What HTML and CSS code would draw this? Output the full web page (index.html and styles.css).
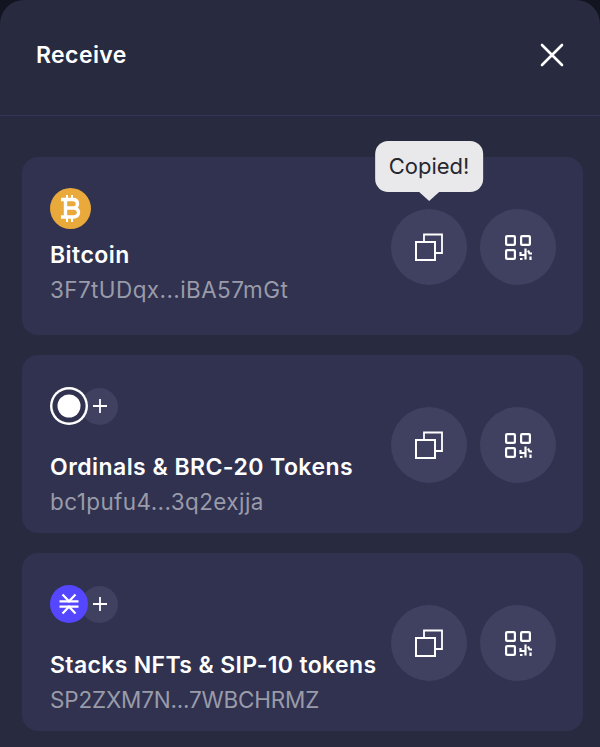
FILE: index.html
```html
<!DOCTYPE html>
<html lang="en">
<head>
<meta charset="utf-8">
<title>Receive</title>
<link rel="stylesheet" href="styles.css">
</head>
<body>
<main class="sheet">
  <header class="sheet-header">
    <h1 class="sheet-title">Receive</h1>
    <button class="close" aria-label="Close">
      <svg viewBox="0 0 24 24" width="24" height="24"><path d="M2 2L22 22M22 2L2 22" fill="none" stroke="#fff" stroke-width="2.6" stroke-linecap="round"/></svg>
    </button>
  </header>
  <section class="list">
    <article class="card">
      <div class="info">
        <div class="icons icons-single">
          <svg class="coin" viewBox="0 0 41 41" width="41" height="41">
            <circle cx="20.5" cy="20.5" r="20.5" fill="#e9a93b"/>
            <path d="M11 11.500h11.500c3 0 5 1.500 5 4.200s-2 4.300-5 4.300H15M15 20h8.500c3 0 5 1.800 5 4.500s-2 4.500-5 4.500H11M15.500 11v18.500" fill="none" stroke="#fff" stroke-width="3.400"/>
            <path d="M17 7v4M22 7v4M17 30v4M22 30v4" fill="none" stroke="#fff" stroke-width="2"/>
          </svg>
        </div>
        <h2 class="name">Bitcoin</h2>
        <p class="addr">3F7tUDqx...iBA57mGt</p>
      </div>
      <div class="actions">
        <div class="action-wrap">
          <div class="tooltip">Copied!</div>
          <button class="round" aria-label="Copy">
            <svg viewBox="0 0 28 28" width="28" height="28"><use href="#i-copy"/></svg>
          </button>
        </div>
        <button class="round" aria-label="QR code">
          <svg viewBox="0 0 28 28" width="28" height="28"><use href="#i-qr"/></svg>
        </button>
      </div>
    </article>

    <article class="card">
      <div class="info">
        <div class="icons">
          <svg class="coin" viewBox="0 0 38 38" width="38" height="38">
            <circle cx="19" cy="19" r="19" fill="#fff"/>
            <circle cx="19" cy="19" r="16.600" fill="#303250"/>
            <circle cx="19" cy="19" r="11.500" fill="#fff"/>
          </svg>
          <span class="plus"><svg viewBox="0 0 16 16" width="16" height="16"><use href="#i-plus"/></svg></span>
        </div>
        <h2 class="name">Ordinals &amp; BRC-20 Tokens</h2>
        <p class="addr">bc1pufu4...3q2exjja</p>
      </div>
      <div class="actions">
        <button class="round" aria-label="Copy">
          <svg viewBox="0 0 28 28" width="28" height="28"><use href="#i-copy"/></svg>
        </button>
        <button class="round" aria-label="QR code">
          <svg viewBox="0 0 28 28" width="28" height="28"><use href="#i-qr"/></svg>
        </button>
      </div>
    </article>

    <article class="card">
      <div class="info">
        <div class="icons">
          <svg class="coin" viewBox="0 0 38 38" width="38" height="38">
            <circle cx="19" cy="19" r="19" fill="#5546ff"/>
            <path d="M9.500 16.300h19M9.500 21.700h19" fill="none" stroke="#fff" stroke-width="2.200"/>
            <path d="M12.500 9.500L19 16.300L25.500 9.500M12.500 28.500L19 21.700L25.500 28.500" fill="none" stroke="#fff" stroke-width="2.200"/>
          </svg>
          <span class="plus"><svg viewBox="0 0 16 16" width="16" height="16"><use href="#i-plus"/></svg></span>
        </div>
        <h2 class="name name-long">Stacks NFTs &amp; SIP-10 tokens</h2>
        <p class="addr addr-caps">SP2ZXM7N...7WBCHRMZ</p>
      </div>
      <div class="actions">
        <button class="round" aria-label="Copy">
          <svg viewBox="0 0 28 28" width="28" height="28"><use href="#i-copy"/></svg>
        </button>
        <button class="round" aria-label="QR code">
          <svg viewBox="0 0 28 28" width="28" height="28"><use href="#i-qr"/></svg>
        </button>
      </div>
    </article>
  </section>
</main>

<svg class="defs" width="0" height="0" aria-hidden="true">
  <defs>
    <symbol id="i-copy" viewBox="0 0 28 28">
      <rect x="1" y="9" width="19" height="18" fill="none" stroke="#fff" stroke-width="2"/>
      <path d="M9 8V1.500h18V20h-6" fill="none" stroke="#fff" stroke-width="1.800"/>
    </symbol>
    <symbol id="i-qr" viewBox="0 0 28 28">
      <rect x="2.100" y="3.100" width="8.800" height="8.800" rx="1" fill="none" stroke="#fff" stroke-width="2.200"/>
      <rect x="17.100" y="3.100" width="8.800" height="8.800" rx="1" fill="none" stroke="#fff" stroke-width="2.200"/>
      <rect x="2.100" y="17.100" width="8.800" height="8.800" rx="1" fill="none" stroke="#fff" stroke-width="2.200"/>
      <path d="M16.500 19v3h4.500M21.500 15.500v11M16 26h2.500M24 17.500l1.500 3h2.500M26.500 23.500v3.500" fill="none" stroke="#fff" stroke-width="2.200"/>
    </symbol>
    <symbol id="i-plus" viewBox="0 0 16 16">
      <path d="M8 1v14M1 8h14" fill="none" stroke="#fff" stroke-width="1.800"/>
    </symbol>
  </defs>
</svg>
</body>
</html>
```
FILE: styles.css
```css
* {
  box-sizing: border-box;
}

html,
body {
  margin: 0;
  height: 100%;
}

body {
  background: #12141f;
  font-family: Inter, "Liberation Sans", sans-serif;
  overflow: hidden;
}

.sheet {
  height: 100%;
  background: #282a40;
  border-radius: 24px 24px 0 0;
}

.sheet-header {
  display: flex;
  align-items: center;
  justify-content: space-between;
  height: 116px;
  padding: 0 36px 6px;
  border-bottom: 1px solid #33355a;
}

.sheet-title {
  margin: 0;
  color: #fff;
  font-size: 23px;
  font-weight: 600;
  letter-spacing: 0.4px;
}

.close {
  display: flex;
  padding: 0;
  border: 0;
  background: none;
}

.list {
  display: flex;
  flex-direction: column;
  gap: 20px;
  padding: 41px 17px 0 22px;
}

.card {
  display: flex;
  align-items: center;
  justify-content: space-between;
  height: 178px;
  padding: 0 27px 0 28px;
  border-radius: 16px;
  background: #303250;
}

.info {
  align-self: flex-start;
  padding-top: 32px;
}

.icons {
  display: flex;
  align-items: center;
  height: 38px;
  margin-bottom: 28px;
}

.icons-single {
  margin-bottom: 14px;
}

.coin {
  position: relative;
  z-index: 1;
  flex: none;
}

.plus {
  display: flex;
  align-items: center;
  justify-content: center;
  width: 37px;
  height: 37px;
  margin-left: -7px;
  border-radius: 50%;
  background: #404160;
}

.name {
  margin: 0;
  color: #fff;
  font-size: 23px;
  font-weight: 600;
  letter-spacing: 0.45px;
  line-height: 28px;
}

.name-long {
  letter-spacing: 0.35px;
}

.addr {
  margin: 7px 0 0;
  color: #9a9ba9;
  font-size: 22.5px;
  letter-spacing: 0.4px;
  line-height: 28px;
}

.addr-caps {
  letter-spacing: -0.2px;
}

.actions {
  display: flex;
  gap: 13px;
  margin-top: 1px;
}

.action-wrap {
  position: relative;
}

.round {
  display: flex;
  align-items: center;
  justify-content: center;
  width: 76px;
  height: 76px;
  padding: 0;
  border: 0;
  border-radius: 50%;
  background: #404160;
}

.tooltip {
  position: absolute;
  left: 50%;
  bottom: 93px;
  transform: translateX(-50%);
  padding: 11px 13.5px;
  border-radius: 13px;
  background: #e9e9eb;
  color: #26272f;
  font-size: 22px;
  line-height: 29px;
  white-space: nowrap;
}

.tooltip::after {
  content: "";
  position: absolute;
  left: 50%;
  top: 100%;
  width: 0;
  height: 0;
  margin-left: -10px;
  border-style: solid;
  border-width: 9px 10px 0;
  border-color: #e9e9eb transparent transparent;
}

.defs {
  position: absolute;
}
```
